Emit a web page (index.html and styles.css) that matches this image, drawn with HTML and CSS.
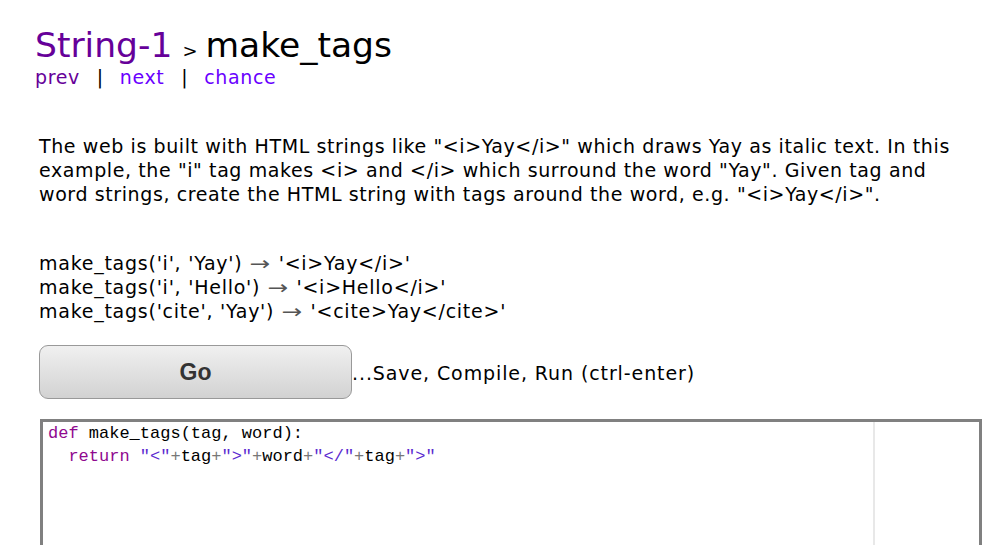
FILE: index.html
```html
<!DOCTYPE html>
<html>
<head>
<meta charset="utf-8">
<link rel="stylesheet" href="styles.css">
</head>
<body>
<div class="page">
  <div class="title">
    <a class="crumb" href="#">String-1</a><span class="sep">&gt;</span><span class="name">make_tags</span>
  </div>
  <div class="nav">
    <a class="visited" href="#">prev</a><span class="bar">|</span><a class="link" href="#">next</a><span class="bar">|</span><a class="link" href="#">chance</a>
  </div>

  <p class="desc">The web is built with HTML strings like "&lt;i&gt;Yay&lt;/i&gt;" which draws Yay as italic text. In this example, the "i" tag makes &lt;i&gt; and &lt;/i&gt; which surround the word "Yay". Given tag and word strings, create the HTML string with tags around the word, e.g. "&lt;i&gt;Yay&lt;/i&gt;".</p>

  <div class="examples">
    <div>make_tags('i', 'Yay') <span class="arrow">&rarr;</span> '&lt;i&gt;Yay&lt;/i&gt;'</div>
    <div>make_tags('i', 'Hello') <span class="arrow">&rarr;</span> '&lt;i&gt;Hello&lt;/i&gt;'</div>
    <div>make_tags('cite', 'Yay') <span class="arrow">&rarr;</span> '&lt;cite&gt;Yay&lt;/cite&gt;'</div>
  </div>

  <div class="go-row">
    <button class="go">Go</button><span class="hint">...Save, Compile, Run (ctrl-enter)</span>
  </div>

  <div class="editor">
    <div class="code">
      <div class="line"><span class="kw">def</span> make_tags(tag, word):</div>
      <div class="line">  <span class="kw">return</span> <span class="str">"&lt;"</span><span class="op">+</span>tag<span class="op">+</span><span class="str">"&gt;"</span><span class="op">+</span>word<span class="op">+</span><span class="str">"&lt;/"</span><span class="op">+</span>tag<span class="op">+</span><span class="str">"&gt;"</span></div>
    </div>
    <div class="margin-line"></div>
  </div>
</div>
</body>
</html>
```

FILE: styles.css
```css
html, body {
  margin: 0;
  padding: 0;
  background: #fff;
}
body {
  font-family: "DejaVu Sans", Verdana, sans-serif;
  color: #000;
}
.page {
  padding: 26px 0 0 35px;
}
.title {
  font-size: 34.5px;
  line-height: 38px;
  white-space: nowrap;
}
.crumb {
  color: #660099;
  text-decoration: none;
}
.sep {
  font-size: 18px;
  margin: 0 8px 0 10px;
}
.name {
  color: #000;
}
.nav {
  margin-top: -5px;
  font-size: 19px;
  letter-spacing: 0.6px;
  line-height: 24px;
}
.nav a {
  text-decoration: none;
}
.nav .visited { color: #660099; }
.nav .link { color: #6a00ff; }
.bar {
  color: #000;
  margin: 0 16px 0 17px;
}
.desc {
  margin: 45px 0 0 4px;
  width: 935px;
  font-size: 19px;
  letter-spacing: 0.6px;
  line-height: 24px;
}
.examples {
  margin: 45px 0 0 4px;
  font-size: 19px;
  letter-spacing: 0.75px;
  line-height: 24px;
}
.arrow {
  display: inline-block;
  color: #555;
  font-size: 19px;
  transform: scaleX(1.3);
  margin: 0 3px;
}
.go-row {
  display: flex;
  align-items: center;
  margin: 22px 0 0 4px;
}
.go {
  width: 313px;
  height: 54px;
  border: 1px solid #999;
  border-radius: 9px;
  background: linear-gradient(#f0f0f0, #d2d2d2);
  font-family: "Liberation Sans", Arial, sans-serif;
  font-weight: bold;
  font-size: 23px;
  color: #333;
  padding: 0;
}
.hint {
  font-size: 19px;
  letter-spacing: 0.9px;
  padding-top: 2px;
}
.editor {
  position: relative;
  margin: 20px 0 0 5px;
  width: 936px;
  height: 200px;
  border: 3px solid #808080;
  border-bottom: none;
}
.code {
  padding: 0 0 0 5px;
  font-family: "Liberation Mono", "DejaVu Sans Mono", monospace;
  font-size: 17px;
  line-height: 23px;
  color: #000;
}
.line {
  white-space: pre;
}
.kw { color: #90098f; }
.str { color: #5b2bd0; }
.op { color: #777; }
.margin-line {
  position: absolute;
  top: 0;
  bottom: 0;
  left: 830px;
  width: 2px;
  background: #e8e8e8;
}
```
